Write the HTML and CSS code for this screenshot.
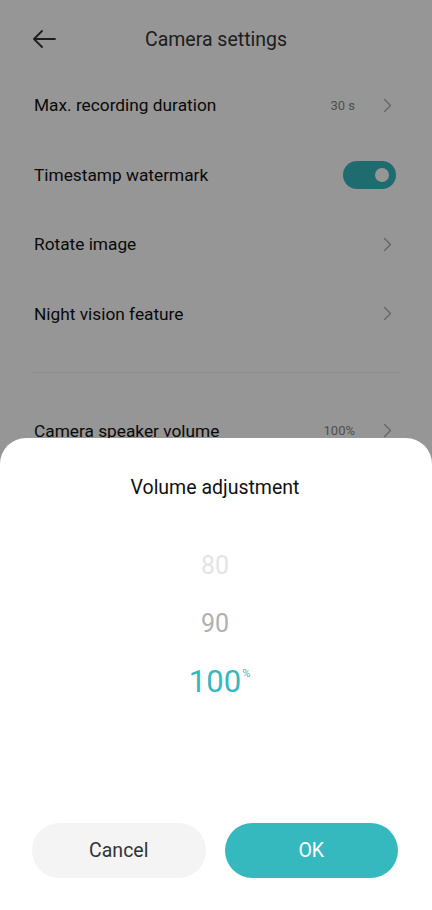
FILE: index.html
```html
<!DOCTYPE html>
<html lang="en">
<head>
<meta charset="utf-8">
<title>Camera settings</title>
<link rel="stylesheet" href="styles.css">
</head>
<body>
<div class="screen">
  <header class="topbar">
    <svg class="back" width="24" height="18" viewBox="0 0 24 18" aria-hidden="true">
      <path d="M23 9H2M10 1L2 9l8 8" fill="none" stroke="#333" stroke-width="1.8" stroke-linecap="round" stroke-linejoin="round"/>
    </svg>
    <h1 class="title">Camera settings</h1>
  </header>

  <ul class="list">
    <li class="row">
      <span class="label">Max. recording duration</span>
      <span class="value">30 s</span>
      <svg class="chev" width="9" height="15" viewBox="0 0 9 15"><path d="M1.5 1.5l6 6-6 6" fill="none" stroke="#aaa" stroke-width="1.4" stroke-linecap="round" stroke-linejoin="round"/></svg>
    </li>
    <li class="row">
      <span class="label">Timestamp watermark</span>
      <span class="toggle"><span class="knob"></span></span>
    </li>
    <li class="row">
      <span class="label">Rotate image</span>
      <svg class="chev" width="9" height="15" viewBox="0 0 9 15"><path d="M1.5 1.5l6 6-6 6" fill="none" stroke="#aaa" stroke-width="1.4" stroke-linecap="round" stroke-linejoin="round"/></svg>
    </li>
    <li class="row">
      <span class="label">Night vision feature</span>
      <svg class="chev" width="9" height="15" viewBox="0 0 9 15"><path d="M1.5 1.5l6 6-6 6" fill="none" stroke="#aaa" stroke-width="1.4" stroke-linecap="round" stroke-linejoin="round"/></svg>
    </li>
  </ul>
  <div class="divider"></div>
  <ul class="list">
    <li class="row">
      <span class="label">Camera speaker volume</span>
      <span class="value">100%</span>
      <svg class="chev" width="9" height="15" viewBox="0 0 9 15"><path d="M1.5 1.5l6 6-6 6" fill="none" stroke="#aaa" stroke-width="1.4" stroke-linecap="round" stroke-linejoin="round"/></svg>
    </li>
  </ul>

  <div class="overlay"></div>

  <section class="sheet">
    <h2 class="sheet-title">Volume adjustment</h2>
    <div class="picker">
      <div class="opt far">80</div>
      <div class="opt near">90</div>
      <div class="opt sel">100<sup class="unit">%</sup></div>
    </div>
    <div class="actions">
      <button class="btn cancel">Cancel</button>
      <button class="btn ok">OK</button>
    </div>
  </section>
</div>
</body>
</html>
```

FILE: styles.css
```css
* { box-sizing: border-box; }
html, body { margin: 0; padding: 0; }
body {
  width: 432px;
  height: 910px;
  overflow: hidden;
  background: #fff;
  font-family: Roboto, "Noto Sans", "Liberation Sans", sans-serif;
  color: #111;
}
.screen {
  position: relative;
  width: 432px;
  height: 910px;
  overflow: hidden;
}
.topbar {
  height: 70px;
  padding-top: 8px;
  display: flex;
  align-items: center;
  position: relative;
}
.back {
  margin-left: 32px;
}
.title {
  position: absolute;
  left: 0; right: 0;
  top: 8px; bottom: 0;
  margin: 0;
  display: flex;
  align-items: center;
  justify-content: center;
  font-size: 19.5px;
  font-weight: 400;
  color: #333;
  pointer-events: none;
}
.list {
  list-style: none;
  margin: 0;
  padding: 0 34px 0 34px;
}
.row {
  height: 69.5px;
  display: flex;
  align-items: center;
}
.list .row:first-child { height: 70px; }
.label {
  flex: 1;
  font-size: 17.3px;
  color: #111;
}
.value {
  font-size: 13px;
  color: #888;
  margin-right: 28px;
}
.chev { margin-right: 6px; }
.toggle {
  width: 53px;
  height: 28px;
  border-radius: 14px;
  background: #36b8bf;
  display: flex;
  align-items: center;
  justify-content: flex-end;
  padding-right: 7px;
  margin-right: 2px;
}
.knob {
  width: 14px;
  height: 14px;
  border-radius: 50%;
  background: #fff;
}
.divider {
  height: 1px;
  background: #ececec;
  margin: 23px 32px 23px;
}
.overlay {
  position: absolute;
  inset: 0;
  background: rgba(0, 0, 0, 0.41);
}
.sheet {
  position: absolute;
  left: 0; right: 0; bottom: 0;
  height: 472px;
  background: #fff;
  border-radius: 26px 26px 0 0;
  display: flex;
  flex-direction: column;
  padding: 36px 34px 32px 32px;
}
.sheet-title {
  margin: 0;
  text-align: center;
  font-size: 19.5px;
  font-weight: 400;
  color: #111;
  line-height: 28px;
}
.picker {
  flex: 1;
  display: flex;
  flex-direction: column;
  align-items: center;
  padding-top: 35px;
}
.opt {
  height: 58px;
  line-height: 58px;
  font-size: 25px;
  font-weight: 400;
  position: relative;
}
.far { color: #e4e4e4; }
.near { color: #b0b0b0; }
.sel {
  color: #36b8bf;
  font-size: 31px;
  font-weight: 400;
}
.unit {
  position: absolute;
  left: 100%;
  top: -8px;
  font-size: 11px;
  margin-left: 1px;
}
.actions {
  display: flex;
  gap: 19px;
}
.btn {
  flex: 1;
  height: 55px;
  border: 0;
  border-radius: 28px;
  font-family: inherit;
  font-size: 19.5px;
}
.cancel { background: #f4f4f4; color: #333; }
.ok { background: #36b8bf; color: #fff; }
```
